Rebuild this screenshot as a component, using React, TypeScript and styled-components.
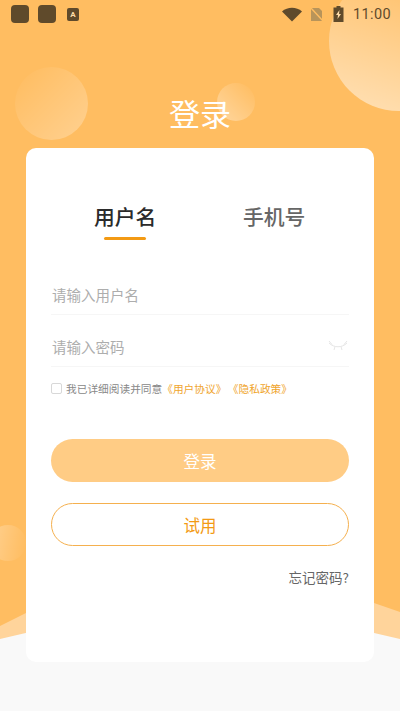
import styled, { createGlobalStyle } from 'styled-components'

const GlobalStyle = createGlobalStyle`
  html, body {
    margin: 0;
    padding: 0;
    background: #f9f9f9;
    font-family: "Noto Sans CJK SC", "Noto Sans", sans-serif;
  }
  * { box-sizing: border-box; }
`

const Screen = styled.div`
  position: relative;
  width: 400px;
  height: 711px;
  overflow: hidden;
  background: #ffbd61;
`

const Bubble = styled.div<{ $size: number; $x: number; $y: number; $angle: number; $alpha: number }>`
  position: absolute;
  left: ${({ $x }) => $x}px;
  top: ${({ $y }) => $y}px;
  width: ${({ $size }) => $size}px;
  height: ${({ $size }) => $size}px;
  border-radius: 50%;
  background: linear-gradient(
    ${({ $angle }) => $angle}deg,
    rgba(255, 255, 255, ${({ $alpha }) => $alpha}) 0%,
    rgba(255, 255, 255, 0) 95%
  );
`

const Waves = styled.svg`
  position: absolute;
  left: 0;
  bottom: 0;
`

const Content = styled.div`
  position: relative;
  display: flex;
  flex-direction: column;
  height: 100%;
`

const StatusBar = styled.div`
  display: flex;
  align-items: center;
  height: 28px;
  padding: 0 9px 0 11px;
`

const AppIcon = styled.div`
  width: 18px;
  height: 18px;
  margin-right: 8.5px;
  border-radius: 4px;
  background: #5f4a2b;
`

const KeyboardIcon = styled.div`
  display: flex;
  align-items: center;
  justify-content: center;
  width: 12px;
  height: 13px;
  margin-left: 3px;
  border-radius: 2px;
  background: #5f4a2b;
  color: #ffdca8;
  font-family: "Roboto", sans-serif;
  font-size: 8px;
  font-weight: 700;
`

const StatusRight = styled.div`
  display: flex;
  align-items: center;
  margin-left: auto;
`

const WifiIcon = styled.svg`
  display: block;
`

const SimIcon = styled.svg`
  display: block;
  margin-left: 8px;
`

const BatteryIcon = styled.svg`
  display: block;
  margin-left: 9px;
`

const Clock = styled.span`
  margin-left: 9px;
  color: #5f4a2b;
  font-family: "Roboto", sans-serif;
  font-size: 14.5px;
  letter-spacing: 0.4px;
`

const Title = styled.h1`
  margin: 0;
  height: 120px;
  padding-top: 62px;
  color: #fff;
  font-size: 31px;
  font-weight: 400;
  line-height: 46px;
  text-align: center;
`

const Card = styled.div`
  display: flex;
  flex-direction: column;
  width: 348px;
  height: 514px;
  margin: 0 auto;
  padding: 0 25px;
  border-radius: 10px;
  background: #fff;
`

const Tabs = styled.div`
  display: flex;
  justify-content: space-between;
  height: 115px;
  padding: 51px 44px 0 43px;
`

const Tab = styled.div<{ $active?: boolean }>`
  position: relative;
  width: 62px;
  color: ${({ $active }) => ($active ? '#2b2b2b' : '#666')};
  font-size: 20.8px;
  font-weight: 500;
  line-height: 34px;
  white-space: nowrap;

  &::after {
    content: '';
    display: ${({ $active }) => ($active ? 'block' : 'none')};
    position: absolute;
    left: 10px;
    top: 38px;
    width: 42px;
    height: 3px;
    border-radius: 2px;
    background: #f39a14;
  }
`

const Field = styled.div`
  display: flex;
  align-items: center;
  justify-content: space-between;
  height: 52px;
  padding: 11px 1px 0;
  border-bottom: 1px solid #f6f6f6;
  color: #adadad;
  font-size: 14.5px;
`

const Agreement = styled.div`
  display: flex;
  align-items: center;
  margin-top: 15px;
  color: #888;
  font-size: 10.7px;
  line-height: 13px;
  white-space: nowrap;
`

const Checkbox = styled.span`
  width: 11px;
  height: 11px;
  margin-right: 4px;
  border: 1px solid #d8d8d8;
  border-radius: 2px;
`

const Link = styled.span`
  margin-right: 1.5px;
  color: #f0a52d;
`

const Button = styled.div<{ $outline?: boolean }>`
  display: flex;
  align-items: center;
  justify-content: center;
  height: 43px;
  margin-top: ${({ $outline }) => ($outline ? '21px' : '44px')};
  border: ${({ $outline }) => ($outline ? '1px solid #f5b04e' : 'none')};
  border-radius: 22px;
  background: ${({ $outline }) => ($outline ? '#fff' : '#ffcc85')};
  color: ${({ $outline }) => ($outline ? '#f39a14' : '#fff')};
  font-size: 16.5px;
`

const Forgot = styled.div`
  margin-top: 21px;
  color: #666;
  font-size: 13.5px;
  line-height: 20px;
  text-align: right;
`

const EyeClosed = () => (
  <svg width="20" height="12" viewBox="0 0 20 12" fill="none" stroke="#e6e6e6" strokeWidth="1">
    <path d="M1 3c5 5 13 5 18 0" />
    <path d="M1 1l3 3.500M19 1l-3 3.500M7 6.500 6 10M13 6.500l1 3.500" />
  </svg>
)

const App = () => (
  <Screen>
    <GlobalStyle />
    <Bubble $size={73} $x={15} $y={67} $angle={315} $alpha={0.3} />
    <Bubble $size={38} $x={217} $y={83} $angle={45} $alpha={0.4} />
    <Bubble $size={140} $x={329} $y={-29} $angle={20} $alpha={0.55} />
    <Bubble $size={36} $x={-10} $y={525} $angle={100} $alpha={0.3} />
    <Waves width="400" height="111" viewBox="0 0 400 111">
      <path d="M0 26 L40 6 L180 -4 L374 3 L400 12 V111 H0 Z" fill="#ffd49b" />
      <path d="M0 39 Q100 14 200 14 Q300 14 400 39 V111 H0 Z" fill="#f9f9f9" />
    </Waves>
    <Content>
      <StatusBar>
        <AppIcon />
        <AppIcon />
        <KeyboardIcon>A</KeyboardIcon>
        <StatusRight>
          <WifiIcon width="20" height="16" viewBox="0 0 20 16">
            <path d="M0 5.500C5.500 0.500 14.500 0.500 20 5.500L10 15.500Z" fill="#5f4a2b" />
          </WifiIcon>
          <SimIcon width="14" height="15" viewBox="0 0 14 15">
            <path d="M1 1h8l3 3v10H1Z" fill="#b8945a" />
            <path d="M0 0 14 15" stroke="#ffbd61" strokeWidth="1.500" />
          </SimIcon>
          <BatteryIcon width="11" height="16" viewBox="0 0 11 16">
            <path d="M3.500 0h4v1.500H10.500V16H0.500V1.500H3.500Z" fill="#5f4a2b" />
            <path d="M6.500 4 3 9h2l-.5 4L8 8H6Z" fill="#ffdca8" />
          </BatteryIcon>
          <Clock>11:00</Clock>
        </StatusRight>
      </StatusBar>
      <Title>登录</Title>
      <Card>
        <Tabs>
          <Tab $active>用户名</Tab>
          <Tab>手机号</Tab>
        </Tabs>
        <Field>请输入用户名</Field>
        <Field>
          请输入密码
          <EyeClosed />
        </Field>
        <Agreement>
          <Checkbox />
          我已详细阅读并同意
          <Link>《用户协议》</Link>
          <Link>《隐私政策》</Link>
        </Agreement>
        <Button>登录</Button>
        <Button $outline>试用</Button>
        <Forgot>忘记密码?</Forgot>
      </Card>
    </Content>
  </Screen>
)

export default App
